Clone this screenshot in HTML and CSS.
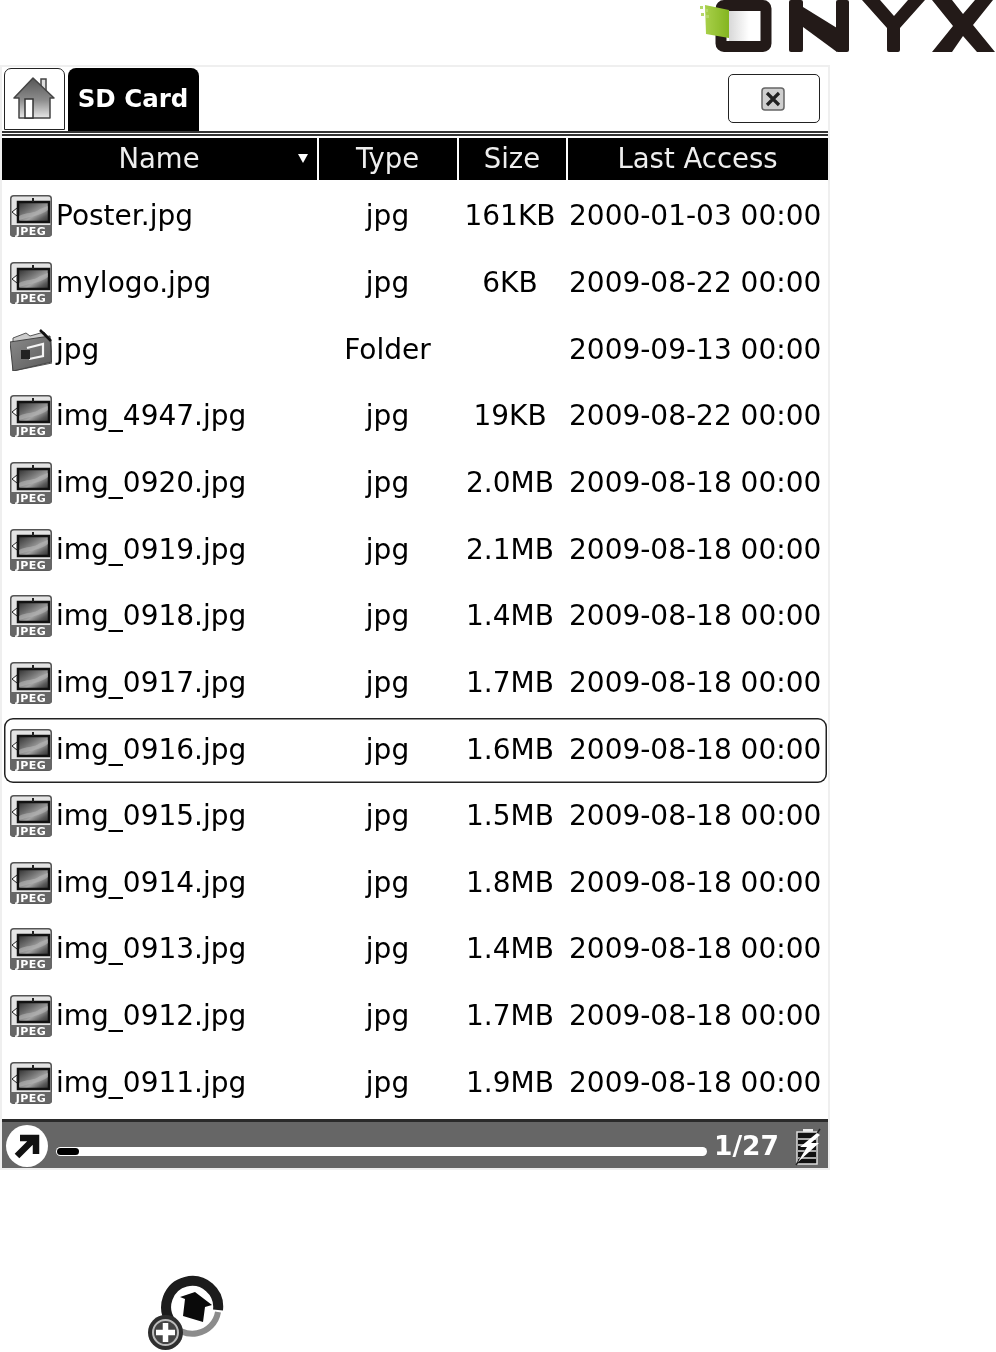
FILE: index.html
```html
<!DOCTYPE html>
<html lang="en">
<head>
<meta charset="utf-8">
<title>SD Card</title>
<link rel="stylesheet" href="styles.css">
</head>
<body>
<svg class="defs" width="0" height="0" aria-hidden="true">
  <defs>
    <linearGradient id="photo" x1="0" y1="0" x2="1" y2="1">
      <stop offset="0" stop-color="#2e2e2e"/>
      <stop offset="0.35" stop-color="#6e6e6e"/>
      <stop offset="0.6" stop-color="#a4a4a4"/>
      <stop offset="0.8" stop-color="#5a5a5a"/>
      <stop offset="1" stop-color="#2c2c2c"/>
    </linearGradient>
    <linearGradient id="house" x1="0" y1="0" x2="0" y2="1">
      <stop offset="0" stop-color="#555"/>
      <stop offset="0.55" stop-color="#8c8c8c"/>
      <stop offset="1" stop-color="#e8e8e8"/>
    </linearGradient>
    <linearGradient id="folder" x1="0" y1="0" x2="1" y2="1">
      <stop offset="0" stop-color="#8a8a8a"/>
      <stop offset="1" stop-color="#5a5a5a"/>
    </linearGradient>
    <linearGradient id="logoFade" x1="0" y1="0" x2="1" y2="0">
      <stop offset="0" stop-color="#d8d8d8"/>
      <stop offset="1" stop-color="#fff"/>
    </linearGradient>
    <linearGradient id="logoGreen" x1="0" y1="0" x2="1" y2="0">
      <stop offset="0" stop-color="#a8d04a"/>
      <stop offset="1" stop-color="#84b520"/>
    </linearGradient>
    <symbol id="jpeg" viewBox="0 0 42 42">
      <rect x="0.75" y="0.75" width="40.5" height="40.5" rx="3" fill="#e4e4e4" stroke="#555" stroke-width="1.500"/>
      <rect x="8" y="7" width="31" height="20" fill="url(#photo)" stroke="#111" stroke-width="2.500"/>
      <path d="M9 21C16 17 24 19 30 14L38 11V15C30 21 22 21 9 25Z" fill="#b4b4b4" opacity="0.6"/>
      <path d="M7 13 2 17 7 21Z" fill="#fff" stroke="#222"/>
      <rect x="22" y="3" width="2" height="4" fill="#222"/>
      <path d="M0 30H42V38.500a3 3 0 0 1-3 3H3a3 3 0 0 1-3-3Z" fill="#666"/>
      <text x="21" y="40" text-anchor="middle" class="jpeg-label">JPEG</text>
    </symbol>
  </defs>
</svg>

<header class="brand">
  <svg class="logo" width="306" height="56" viewBox="690 0 306 56" role="img" aria-label="ONYX">
    <rect x="721" y="5.500" width="45" height="41" rx="3" fill="none" stroke="#231a18" stroke-width="11"/>
    <rect x="729" y="11" width="20" height="30" fill="url(#logoFade)"/>
    <path d="M705 5 729 10V38L706 34Z" fill="url(#logoGreen)"/>
    <path d="M700 6h3v3h-3zM705 9h3v3h-3zM701 13h3v3h-3zM706 15h3v3h-3z" fill="#b5d86a"/>
    <rect x="789" y="0" width="14" height="52" rx="2" fill="#231a18"/>
    <rect x="836" y="0" width="13" height="52" rx="2" fill="#231a18"/>
    <path d="M803 7 837 28V52L803 27Z" fill="#231a18"/>
    <path d="M862 0H880L894 16 908 0H925L900 28V50Q900 52 898 52H889Q887 52 887 50V28Z" fill="#231a18"/>
    <path d="M932 0H952L963 14 975 0H993L973 25 995 52H977L963 36 952 52H932L953 26Z" fill="#231a18"/>
  </svg>
</header>

<main class="panel">
  <div class="tabs">
    <div class="tab-home">
      <svg width="42" height="44" viewBox="0 0 42 44">
        <path d="M28 2h5v12h-5z" fill="#ddd" stroke="#444" stroke-width="1.500"/>
        <path d="M20 1 1 21H6V41H37V21H41Z" fill="url(#house)" stroke="#444" stroke-width="1.500" stroke-linejoin="round"/>
        <path d="M12 22H20V41H12Z" fill="#fff" stroke="#333" stroke-width="1.500"/>
      </svg>
    </div>
    <div class="tab-active">SD Card</div>
    <button class="close" type="button" aria-label="Close">
      <svg width="24" height="24" viewBox="0 0 24 24">
        <rect x="1" y="1" width="22" height="22" rx="3" fill="#cfcfcf" stroke="#666" stroke-width="1.500"/>
        <path d="M6 6 18 18M18 6 6 18" stroke="#222" stroke-width="3.200"/>
      </svg>
    </button>
  </div>
  <div class="rule"></div>

  <div class="head">
    <div class="head-cell head-name">Name</div>
    <div class="head-cell">Type</div>
    <div class="head-cell">Size</div>
    <div class="head-cell">Last Access</div>
  </div>

  <div class="rows">
    <div class="row"><div class="name"><svg class="ficon"><use href="#jpeg"/></svg>Poster.jpg</div><div class="type">jpg</div><div class="size">161KB</div><div class="date">2000-01-03 00:00</div></div>
    <div class="row"><div class="name"><svg class="ficon"><use href="#jpeg"/></svg>mylogo.jpg</div><div class="type">jpg</div><div class="size">6KB</div><div class="date">2009-08-22 00:00</div></div>
    <div class="row"><div class="name">
      <svg class="ficon" viewBox="0 0 42 42">
        <path d="M3 9 16 4 20 7 34 3 41 11 42 34 3 42Z" fill="#ccc" stroke="#555"/>
        <path d="M0 13 40 7 41.500 33 3 42Z" fill="url(#folder)" stroke="#444"/>
        <path d="M30 1 41 12" stroke="#111" stroke-width="2.500"/>
        <path d="M17 19 33 15V27L19 30" fill="none" stroke="#f4f4f4" stroke-width="2.200"/>
        <path d="M11 21H20V30H11Z" fill="#222"/>
      </svg>jpg</div><div class="type">Folder</div><div class="size"></div><div class="date">2009-09-13 00:00</div></div>
    <div class="row"><div class="name"><svg class="ficon"><use href="#jpeg"/></svg>img_4947.jpg</div><div class="type">jpg</div><div class="size">19KB</div><div class="date">2009-08-22 00:00</div></div>
    <div class="row"><div class="name"><svg class="ficon"><use href="#jpeg"/></svg>img_0920.jpg</div><div class="type">jpg</div><div class="size">2.0MB</div><div class="date">2009-08-18 00:00</div></div>
    <div class="row"><div class="name"><svg class="ficon"><use href="#jpeg"/></svg>img_0919.jpg</div><div class="type">jpg</div><div class="size">2.1MB</div><div class="date">2009-08-18 00:00</div></div>
    <div class="row"><div class="name"><svg class="ficon"><use href="#jpeg"/></svg>img_0918.jpg</div><div class="type">jpg</div><div class="size">1.4MB</div><div class="date">2009-08-18 00:00</div></div>
    <div class="row"><div class="name"><svg class="ficon"><use href="#jpeg"/></svg>img_0917.jpg</div><div class="type">jpg</div><div class="size">1.7MB</div><div class="date">2009-08-18 00:00</div></div>
    <div class="row selected"><div class="name"><svg class="ficon"><use href="#jpeg"/></svg>img_0916.jpg</div><div class="type">jpg</div><div class="size">1.6MB</div><div class="date">2009-08-18 00:00</div></div>
    <div class="row"><div class="name"><svg class="ficon"><use href="#jpeg"/></svg>img_0915.jpg</div><div class="type">jpg</div><div class="size">1.5MB</div><div class="date">2009-08-18 00:00</div></div>
    <div class="row"><div class="name"><svg class="ficon"><use href="#jpeg"/></svg>img_0914.jpg</div><div class="type">jpg</div><div class="size">1.8MB</div><div class="date">2009-08-18 00:00</div></div>
    <div class="row"><div class="name"><svg class="ficon"><use href="#jpeg"/></svg>img_0913.jpg</div><div class="type">jpg</div><div class="size">1.4MB</div><div class="date">2009-08-18 00:00</div></div>
    <div class="row"><div class="name"><svg class="ficon"><use href="#jpeg"/></svg>img_0912.jpg</div><div class="type">jpg</div><div class="size">1.7MB</div><div class="date">2009-08-18 00:00</div></div>
    <div class="row"><div class="name"><svg class="ficon"><use href="#jpeg"/></svg>img_0911.jpg</div><div class="type">jpg</div><div class="size">1.9MB</div><div class="date">2009-08-18 00:00</div></div>
  </div>

  <footer class="status">
    <svg class="status-go" width="44" height="44" viewBox="0 0 44 44">
      <circle cx="22" cy="22" r="21" fill="#fff"/>
      <path d="M12 32 29 15M15 14H31V30" fill="none" stroke="#111" stroke-width="6.500"/>
    </svg>
    <div class="progress"><div class="progress-fill"></div></div>
    <div class="page">1/27</div>
    <svg class="battery" width="28" height="40" viewBox="0 0 28 40">
      <path d="M9 2h10v3H9z" fill="#eee"/>
      <rect x="3" y="5" width="20" height="32" fill="#111" stroke="#ddd" stroke-width="1.500"/>
      <path d="M4 12H22M4 18H22M4 24H22M4 31H22" stroke="#ddd" stroke-width="1.500"/>
      <path d="M2 38 26 2" stroke="#222" stroke-width="1.500"/>
      <path d="M23 6 6 20H13L4 35 25 16H17L26 8Z" fill="#fff"/>
    </svg>
  </footer>
</main>

<div class="dock">
  <svg width="78" height="78" viewBox="0 0 78 78">
    <path d="M70 36A26 26 0 1 0 23 48" fill="none" stroke="#1c1c1c" stroke-width="10"/>
    <path d="M22 47A26 26 0 0 0 70 38" fill="none" stroke="#8c8c8c" stroke-width="6"/>
    <path d="M47 18 64 31 57 33 55 48 35 42 37 25 32 23Z" fill="#0a0a0a"/>
    <circle cx="17.500" cy="58.500" r="17.500" fill="#2e2e2e"/>
    <circle cx="17.500" cy="58.500" r="12.500" fill="#444" stroke="#bbb" stroke-width="2"/>
    <path d="M17.500 49V68M8 58.500H27" stroke="#fff" stroke-width="5.500"/>
  </svg>
</div>
</body>
</html>
```

FILE: styles.css
```css
* {
  box-sizing: border-box;
}

html,
body {
  margin: 0;
  padding: 0;
  background: #fff;
}

body {
  font-family: "DejaVu Sans", sans-serif;
  color: #000;
  height: 1352px;
  overflow: hidden;
}

.defs {
  display: block;
  width: 0;
  height: 0;
}

.jpeg-label {
  font-family: "DejaVu Sans", sans-serif;
  font-weight: 700;
  font-size: 11px;
  letter-spacing: 0.5px;
  fill: #fff;
}

.brand {
  height: 65px;
  display: flex;
  justify-content: flex-end;
  filter: blur(0.5px);
}

.logo {
  display: block;
}

.panel {
  width: 830px;
  height: 1105px;
  border: 2px solid #efefef;
  background: #fff;
  filter: blur(0.4px);
}

.tabs {
  display: flex;
  align-items: flex-start;
  height: 64px;
  padding: 1px 0 0 2px;
}

.tab-home {
  width: 61px;
  height: 62px;
  border: 1.5px solid #222;
  border-radius: 7px 7px 0 0;
  display: flex;
  align-items: center;
  justify-content: center;
  padding-right: 2px;
}

.tab-active {
  width: 131px;
  height: 63px;
  margin-left: 3px;
  background: #000;
  color: #fff;
  font-weight: 700;
  font-size: 24.5px;
  border-radius: 8px 8px 0 0;
  display: flex;
  align-items: center;
  justify-content: center;
  padding: 0 1px 2px 0;
}

.close {
  margin: 6px 8px 0 auto;
  width: 92px;
  height: 49px;
  padding: 0 3px 0 0;
  background: #fff;
  border: 1.5px solid #222;
  border-radius: 5px;
  display: flex;
  align-items: center;
  justify-content: center;
}

.rule {
  height: 5px;
  border-top: 2px solid #333;
  border-bottom: 2px solid #333;
  margin-bottom: 2px;
}

.head {
  display: grid;
  grid-template-columns: 315px 138px 107px 260px;
  column-gap: 2px;
  height: 42px;
  margin-bottom: 3px;
}

.head-cell {
  background: #000;
  color: #eee;
  font-size: 27.5px;
  display: flex;
  align-items: center;
  justify-content: center;
  padding: 0 1px 2px 0;
}

.head-name {
  position: relative;
}

.head-name::after {
  content: "";
  position: absolute;
  left: 296px;
  top: 16px;
  border-left: 5px solid transparent;
  border-right: 5px solid transparent;
  border-top: 9px solid #fff;
}

.rows {
  display: grid;
  grid-template-rows: repeat(14, 1fr);
  height: 933px;
  margin-bottom: 3px;
}

.row {
  display: grid;
  grid-template-columns: 313px 138px 107px 259px;
  column-gap: 2px;
  align-items: center;
  margin: 0 1px 0 2px;
  font-size: 28px;
  line-height: 1;
}

.selected {
  margin-top: 2px;
  border-radius: 9px;
  box-shadow: inset 0 0 0 1.5px #222;
}

.name {
  display: flex;
  align-items: center;
  gap: 4px;
  padding-left: 6px;
}

.ficon {
  width: 42px;
  height: 42px;
  flex: none;
}

.type {
  text-align: center;
  padding-right: 1px;
}

.size {
  text-align: center;
  padding-right: 5px;
}

.date {
  white-space: nowrap;
  padding-left: 1px;
}

.status {
  height: 49px;
  border-top: 3px solid #2a2a2a;
  background: #666;
  display: flex;
  align-items: center;
  padding: 0 0 0 3px;
}

.status-go {
  flex: none;
  margin-top: 2px;
}

.progress {
  width: 651px;
  height: 9px;
  margin: 13px 0 0 7px;
  background: #fff;
  border-radius: 5px;
  padding: 1px;
}

.progress-fill {
  width: 22px;
  height: 7px;
  background: #000;
  border-radius: 4px;
}

.page {
  width: 72px;
  margin-left: 7px;
  color: #fff;
  font-weight: 700;
  font-size: 26.5px;
}

.battery {
  flex: none;
  margin-left: 8px;
  margin-top: 3px;
}

.dock {
  margin: 104px 0 0 148px;
  height: 78px;
}

.dock svg {
  display: block;
}
```
